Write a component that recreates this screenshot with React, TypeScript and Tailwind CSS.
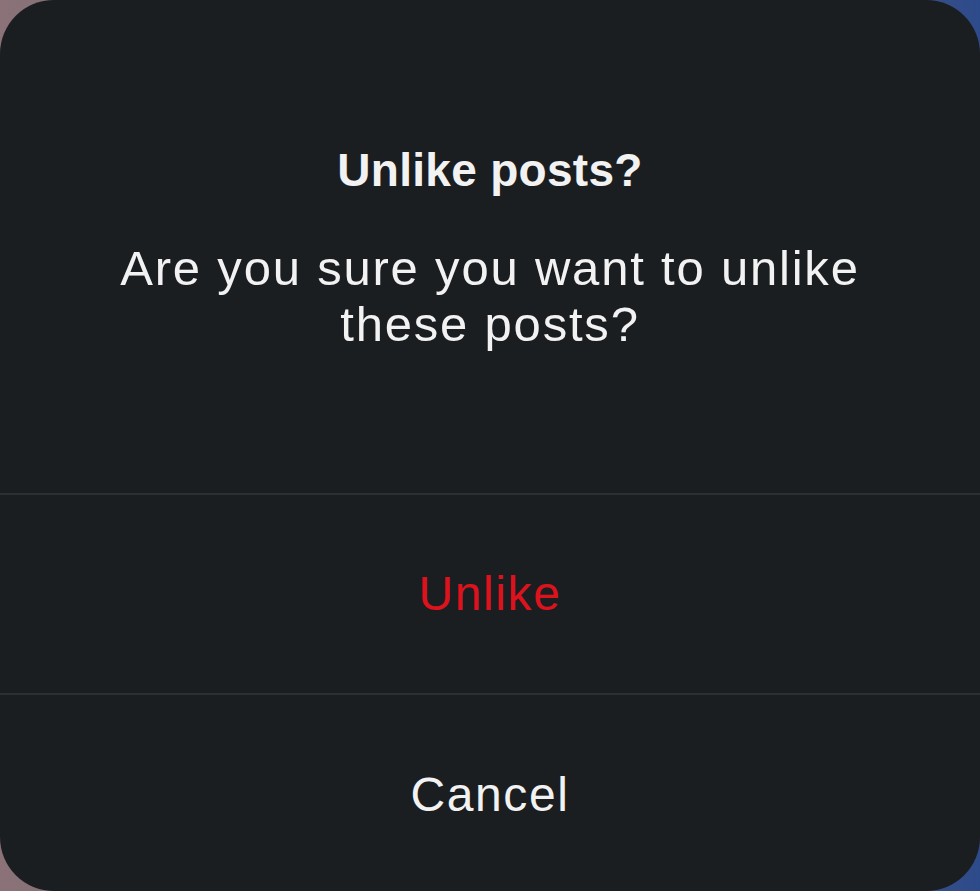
export default function App() {
  return (
    <div className="h-[891px] w-[980px] bg-[linear-gradient(90deg,#8a7278_0%,#6f6a6a_45%,#5a5f80_75%,#2d4a8a_100%)]">
      <div
        className="flex h-full w-full flex-col overflow-hidden rounded-[54px] bg-[#1b1e21] text-[#f2f2f2]"
        style={{ fontFamily: "'Liberation Sans', Arial, sans-serif" }}
      >
        {/* Message */}
        <div className="flex h-[493px] flex-col items-center pt-[140px] text-center">
          <h1 className="text-[46px] font-bold leading-[60px] tracking-[0.3px]">Unlike posts?</h1>
          <p className="mt-[40px] max-w-[800px] text-[49px] leading-[56px] tracking-[1.8px]">
            Are you sure you want to unlike these posts?
          </p>
        </div>

        <div className="h-[2px] bg-[#2d3033]" />

        <button className="flex h-[198px] items-center justify-center text-[48px] tracking-[1.6px] text-[#dc121d]">
          Unlike
        </button>

        <div className="h-[2px] bg-[#2d3033]" />

        <button className="flex flex-1 items-center justify-center pt-[4px] text-[48px] tracking-[1.6px] text-[#f2f2f2]">
          Cancel
        </button>
      </div>
    </div>
  );
}
